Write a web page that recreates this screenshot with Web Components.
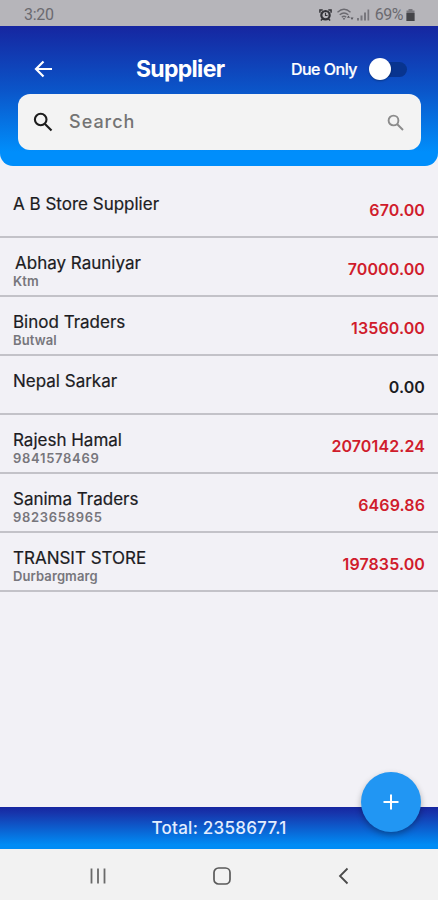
<!DOCTYPE html>
<html lang="en">
<head>
<meta charset="utf-8">
<title>Supplier</title>
<style>
  body {
    margin: 0;
    background: #f2f1f6;
    font-family: Inter, Roboto, sans-serif;
  }
</style>
</head>
<body>
<supplier-app></supplier-app>

<script>
class StatusBar extends HTMLElement {
  constructor() {
    super();
    this.attachShadow({ mode: "open" }).innerHTML = `
      <style>
        :host {
          display: flex;
          align-items: center;
          justify-content: space-between;
          box-sizing: border-box;
          height: 26px;
          padding: 3px 23px 0 24px;
          background: #b6b5ba;
          color: #6b6a70;
          font: 16px/20px Roboto, sans-serif;
          letter-spacing: -0.3px;
        }
        .right {
          display: flex;
          align-items: center;
        }
        .battery-text {
          margin: 0 3px 0 5px;
          letter-spacing: -0.5px;
        }
        svg { display: block; }
      </style>
      <span><slot></slot></span>
      <div class="right">
        <svg width="13" height="14" viewBox="0 0 14 14" fill="none" stroke="#333338">
          <path d="M1 4.5V1.5H4M13 4.5V1.5H10M2 13l2-2M12 13l-2-2" stroke-width="1.6"/>
          <circle cx="7" cy="7.2" r="4.5" stroke-width="2.4"/>
          <path d="M7 4.5v3h2.2" stroke-width="1.2"/>
        </svg>
        <svg style="margin-left:5px" width="18" height="14" viewBox="0 0 18 14" fill="none" stroke="#6b6a70" stroke-width="1.4">
          <path d="M.5 4.2Q7-1.5 13.5 4.2M2.7 6.8q4.3-3.7 8.6 0M4.8 9.2q2.2-1.8 4.4 0"/>
          <path d="M5.7 10.3h2.6L7 12zM10 9.8l1.5-2.3 1.5 2.3zM13.5 9.5h3L15 12z" fill="#55545a" stroke="none"/>
        </svg>
        <svg style="margin-left:2px" width="13" height="14" viewBox="0 0 13 14" fill="#77767c">
          <path d="M0 10h2v2.5H0zM3.5 7.5h2v5h-2zM7 4.5h2v8H7zM10.5 1.5h1.7v11h-1.7z"/>
        </svg>
        <span class="battery-text">69%</span>
        <svg width="9" height="14" viewBox="0 0 9 14">
          <path d="M2.5 1h4v1.5H8.5V13h-8V2.5h2z" fill="#77767c"/>
          <path d="M.5 5h8v8h-8z" fill="#444448"/>
        </svg>
      </div>
    `;
  }
}

class ToggleSwitch extends HTMLElement {
  constructor() {
    super();
    this.attachShadow({ mode: "open" }).innerHTML = `
      <style>
        :host {
          display: flex;
          align-items: center;
          width: 39px;
          height: 24px;
        }
        .track {
          width: 33px;
          height: 15px;
          margin-left: 5px;
          border-radius: 8px;
          background: #08348f;
        }
        .thumb {
          flex: none;
          width: 22px;
          height: 22px;
          margin-left: -38px;
          border-radius: 50%;
          background: #fff;
          box-shadow: 0 1px 2px rgba(0, 0, 0, 0.3);
        }
      </style>
      <div class="track"></div>
      <div class="thumb"></div>
    `;
  }
}

class SearchBox extends HTMLElement {
  constructor() {
    super();
    this.attachShadow({ mode: "open" }).innerHTML = `
      <style>
        :host {
          display: flex;
          align-items: center;
          box-sizing: border-box;
          height: 56px;
          padding: 0 17px 0 15px;
          border-radius: 12px;
          background: #f3f3f3;
          color: #747474;
          font-size: 18px;
          font-weight: 500;
          letter-spacing: 1px;
        }
        .text {
          flex: 1;
          margin-left: 16px;
          padding-bottom: 2px;
        }
        svg { display: block; flex: none; }
      </style>
      <svg width="20" height="20" viewBox="0 0 20 20" fill="none" stroke="#1c1c1c" stroke-width="2.1">
        <circle cx="7.7" cy="7.5" r="5.8"/>
        <path d="M12 12l6.5 6.5"/>
      </svg>
      <span class="text"><slot></slot></span>
      <svg width="17" height="17" viewBox="0 0 17 17" fill="none" stroke="#8c8c8c" stroke-width="1.9">
        <circle cx="6.5" cy="6.5" r="4.9"/>
        <path d="M10 10l6 6"/>
      </svg>
    `;
  }
}

class AppHeader extends HTMLElement {
  constructor() {
    super();
    this.attachShadow({ mode: "open" }).innerHTML = `
      <style>
        :host {
          display: block;
          box-sizing: border-box;
          height: 140px;
          padding: 23px 17px 0 18px;
          border-radius: 0 0 13px 13px;
          background: linear-gradient(#1626a0, #0b54c8 45%, #008efb 90%);
          color: #fff;
        }
        .bar {
          display: flex;
          align-items: center;
          height: 40px;
          padding: 0 13px 0 16px;
          margin-bottom: 5px;
        }
        h1 {
          flex: 1;
          margin: 0 0 0 83px;
          font-size: 23px;
          font-weight: 700;
          letter-spacing: -0.7px;
        }
        .due {
          margin-right: 12px;
          font-size: 16px;
          font-weight: 500;
          letter-spacing: -0.5px;
          -webkit-text-stroke: 0.2px;
        }
      </style>
      <div class="bar">
        <svg width="19" height="18" viewBox="0 0 19 18" fill="none" stroke="#fff" stroke-width="2.2">
          <path d="M9.5 1.5 2 9l7.5 7.5M2 9h16"/>
        </svg>
        <h1><slot></slot></h1>
        <span class="due">Due Only</span>
        <toggle-switch></toggle-switch>
      </div>
      <search-box>Search</search-box>
    `;
  }
}

class SupplierItem extends HTMLElement {
  constructor() {
    super();
    this.shadowDOM = this.attachShadow({ mode: "open" });
  }

  set supplier(supplier) {
    this._supplier = supplier;
    this.render();
  }

  render() {
    const { name, note, amount, indent } = this._supplier;
    this.shadowDOM.innerHTML = `
      <style>
        :host {
          display: flex;
          justify-content: space-between;
          box-sizing: border-box;
          height: 59px;
          padding: 14px 13px 0;
          border-bottom: 2px solid #c3c2c8;
        }
        .name {
          font-size: 17px;
          line-height: 22px;
          color: #1c1c1f;
          -webkit-text-stroke: 0.2px;
        }
        .indent { padding-left: 2px; }
        .note {
          font-size: 13px;
          font-weight: 600;
          line-height: 15px;
          color: #77767c;
          letter-spacing: 0.1px;
        }
        .phone { letter-spacing: 0.7px; }
        .amount {
          margin-top: 7px;
          font-size: 16px;
          font-weight: 600;
          line-height: 21px;
          letter-spacing: 0.1px;
          color: #d01c2c;
        }
        .zero { color: #1c1c1f; }
      </style>
      <div>
        <div class="name ${indent ? "indent" : ""}">${name}</div>
        <div class="note ${/^\d+$/.test(note) ? "phone" : ""}">${note}</div>
      </div>
      <div class="amount ${Number(amount) === 0 ? "zero" : ""}">${amount}</div>
    `;
  }
}

class TotalBar extends HTMLElement {
  constructor() {
    super();
    this.attachShadow({ mode: "open" }).innerHTML = `
      <style>
        :host {
          display: flex;
          align-items: center;
          justify-content: center;
          position: relative;
          height: 42px;
          background: linear-gradient(#1626a0, #1735ac 15%, #008cf5 90%);
          color: #e3edff;
          font-size: 17px;
          font-weight: 500;
          letter-spacing: 0.25px;
        }
        .add {
          position: absolute;
          right: 17px;
          top: -35px;
          display: grid;
          place-items: center;
          width: 60px;
          height: 60px;
          border-radius: 50%;
          background: #2196f3;
          box-shadow: 0 3px 6px rgba(0, 0, 0, 0.3);
        }
      </style>
      <slot></slot>
      <div class="add">
        <svg width="16" height="16" viewBox="0 0 16 16" stroke="#fff" stroke-width="2">
          <path d="M8 .5v15M.5 8h15"/>
        </svg>
      </div>
    `;
  }
}

class NavBar extends HTMLElement {
  constructor() {
    super();
    this.attachShadow({ mode: "open" }).innerHTML = `
      <style>
        :host {
          display: flex;
          align-items: center;
          justify-content: space-between;
          box-sizing: border-box;
          height: 51px;
          padding: 2px 88px 0 89px;
          background: #f2f2f2;
        }
        svg { display: block; }
      </style>
      <svg width="18" height="18" viewBox="0 0 18 18" stroke="#6a6a6a" stroke-width="1.8">
        <path d="M2.5 1.5v15M9 1.5v15M15.5 1.5v15"/>
      </svg>
      <svg width="20" height="18" viewBox="0 0 20 18" fill="none" stroke="#5a5a5a" stroke-width="1.7">
        <rect x="1" y="1" width="16" height="16" rx="4.5"/>
      </svg>
      <svg width="12" height="18" viewBox="0 0 12 18" fill="none" stroke="#4a4a4a" stroke-width="1.8">
        <path d="M9.5 1.5 2 9l7.5 7.5"/>
      </svg>
    `;
  }
}

class SupplierApp extends HTMLElement {
  constructor() {
    super();
    this.shadowDOM = this.attachShadow({ mode: "open" });
    this.suppliers = [
      { name: "A B Store Supplier", note: "", amount: "670.00" },
      { name: "Abhay Rauniyar", note: "Ktm", amount: "70000.00", indent: true },
      { name: "Binod Traders", note: "Butwal", amount: "13560.00" },
      { name: "Nepal Sarkar", note: "", amount: "0.00" },
      { name: "Rajesh Hamal", note: "9841578469", amount: "2070142.24" },
      { name: "Sanima Traders", note: "9823658965", amount: "6469.86" },
      { name: "TRANSIT STORE", note: "Durbargmarg", amount: "197835.00" },
    ];
  }

  connectedCallback() {
    this.shadowDOM.innerHTML = `
      <style>
        :host {
          display: flex;
          flex-direction: column;
          height: 900px;
          overflow: hidden;
        }
        main {
          flex: 1;
          padding-top: 13px;
        }
      </style>
      <status-bar>3:20</status-bar>
      <app-header>Supplier</app-header>
      <main></main>
      <total-bar>Total: 2358677.1</total-bar>
      <nav-bar></nav-bar>
    `;
    const list = this.shadowDOM.querySelector("main");
    this.suppliers.forEach((supplier) => {
      const item = document.createElement("supplier-item");
      item.supplier = supplier;
      list.appendChild(item);
    });
  }
}

customElements.define("status-bar", StatusBar);
customElements.define("toggle-switch", ToggleSwitch);
customElements.define("search-box", SearchBox);
customElements.define("app-header", AppHeader);
customElements.define("supplier-item", SupplierItem);
customElements.define("total-bar", TotalBar);
customElements.define("nav-bar", NavBar);
customElements.define("supplier-app", SupplierApp);
</script>
</body>
</html>
